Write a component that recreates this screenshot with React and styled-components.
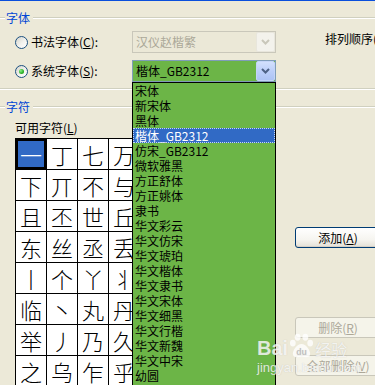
import React from "react";
import styled, { createGlobalStyle } from "styled-components";

const GREEN = "#6cb547";
const UI_FONT = `"Noto Sans CJK SC", "Noto Sans", "Liberation Sans", sans-serif`;

const Global = createGlobalStyle`
  html, body { margin: 0; padding: 0; background: #ece9d8; }
  body { width: 375px; height: 385px; overflow: hidden; font-family: ${UI_FONT}; }
`;

const Window = styled.div`
  position: relative;
  width: 375px;
  height: 385px;
  overflow: hidden;
  background: #ece9d8;
  font-size: 12px;
  line-height: 14px;
  color: #000;
`;

const TopEdge = styled.div`
  height: 1px;
  background: #0a4fdc;
`;

const GroupHeader = styled.div`
  display: flex;
  align-items: center;
  height: 14px;
  margin-top: ${(p) => p.$top}px;
`;

const Rule = styled.div`
  height: 0;
  border-top: 1px solid #d0d0bf;
  border-bottom: 1px solid #fff;
  flex: ${(p) => (p.$grow ? "1" : "none")};
  width: ${(p) => (p.$grow ? "auto" : "5px")};
`;

const GroupLabel = styled.span`
  color: #0046d5;
  padding: 0 3px 0 1px;
`;

const Separator = styled.div`
  margin-top: ${(p) => p.$top}px;
  border-top: 1px solid #d0d0bf;
  border-bottom: 1px solid #fff;
`;

const OptionRow = styled.div`
  display: flex;
  align-items: center;
  height: 22px;
  padding-left: 15px;
  margin-top: ${(p) => p.$top}px;
  white-space: nowrap;
`;

const Radio = styled.span`
  flex: none;
  box-sizing: border-box;
  width: 13px;
  height: 13px;
  border-radius: 50%;
  border: 1px solid #1c5180;
  background: linear-gradient(135deg, #d4d3cb 0%, #f3f3ef 55%, #fff 100%);
  display: flex;
  align-items: center;
  justify-content: center;
  &::after {
    content: "";
    width: 5px;
    height: 5px;
    border-radius: 50%;
    background: ${(p) =>
      p.$checked
        ? "radial-gradient(circle at 35% 35%, #8df08a 0%, #2fb52c 55%, #138f12 100%)"
        : "transparent"};
  }
`;

const OptionLabel = styled.span`
  width: 101px;
  margin-left: 3px;
  flex: none;
`;

const SortLabel = styled.span`
  margin-left: 49px;
  align-self: flex-start;
  margin-top: 1px;
`;

const ComboWrap = styled.div`
  position: relative;
  flex: none;
`;

const Combo = styled.div`
  box-sizing: border-box;
  width: 144px;
  height: 22px;
  border: 1px solid ${(p) => (p.$disabled ? "#c9c7ba" : "#7f9db9")};
  background: ${(p) => (p.$disabled ? "#ebe8d7" : GREEN)};
  display: flex;
  align-items: center;
`;

const ComboText = styled.span`
  flex: 1;
  padding-left: 3px;
  color: ${(p) => (p.$disabled ? "#aca899" : "#000")};
`;

const DropButton = styled.span`
  box-sizing: border-box;
  width: 19px;
  height: 20px;
  border-radius: 2px;
  border: 1px solid ${(p) => (p.$disabled ? "#e8e6dc" : "#c4d4f8")};
  background: ${(p) =>
    p.$disabled
      ? "#f3f2ec"
      : "linear-gradient(180deg, #d3e0fd 0%, #bccff9 50%, #adc3f5 100%)"};
  display: flex;
  align-items: center;
  justify-content: center;
`;

const DropList = styled.div`
  position: absolute;
  top: 100%;
  left: 0;
  z-index: 3;
  box-sizing: border-box;
  width: 144px;
  border: 1px solid #000;
  background: ${GREEN};
  padding-bottom: 4px;
`;

const ListItem = styled.div`
  height: 15px;
  line-height: 15px;
  padding-left: 2px;
  white-space: nowrap;
  color: ${(p) => (p.$active ? "#fff" : "#000")};
  background: ${(p) => (p.$active ? "#316ac5" : "transparent")};
  outline: ${(p) => (p.$active ? "1px dotted #c8d8f0" : "none")};
  outline-offset: -1px;
`;

const CharArea = styled.div`
  display: grid;
  grid-template-columns: 280px 1fr;
  padding-left: 15px;
`;

const CharColumn = styled.div`
  display: flex;
  flex-direction: column;
`;

const FieldLabel = styled.div`
  margin-top: 7px;
`;

const CharGrid = styled.div`
  margin-top: 3px;
  display: grid;
  grid-template-columns: repeat(7, 30px);
  grid-auto-rows: 30px;
  gap: 1px;
  width: max-content;
  background: #000;
  border: 1px solid #000;
`;

const Cell = styled.div`
  position: relative;
  display: flex;
  align-items: center;
  justify-content: center;
  background: ${(p) => (p.$selected ? "#316ac5" : "#fff")};
  color: ${(p) => (p.$selected ? "#fff" : "#000")};
  font-size: 22px;
  line-height: 1;
  font-weight: 300;
  box-shadow: ${(p) => (p.$selected ? "inset 0 0 0 2px #000" : "none")};
  outline: ${(p) => (p.$selected ? "1px solid #000" : "none")};
`;

const ButtonColumn = styled.div`
  display: flex;
  flex-direction: column;
`;

const PushButton = styled.button`
  box-sizing: border-box;
  width: 86px;
  height: 21px;
  padding: 0;
  margin-top: ${(p) => p.$top}px;
  border-radius: 3px;
  border: 1px solid ${(p) => (p.disabled ? "#c9c7ba" : "#003c74")};
  background: ${(p) =>
    p.disabled
      ? "#f5f4ea"
      : "linear-gradient(180deg, #ffffff 0%, #f6f5f0 60%, #e3e0d6 100%)"};
  box-shadow: ${(p) => (p.disabled ? "none" : "inset 0 -1px 0 #d6d0c5")};
  color: ${(p) => (p.disabled ? "#aca899" : "#000")};
  font-family: ${UI_FONT};
  font-size: 12px;
  line-height: 14px;
  text-align: center;
`;

const Watermark = styled.div`
  position: absolute;
  left: 257px;
  top: 332px;
  z-index: 5;
  color: rgba(255, 255, 255, 0.78);
  text-shadow: 0 0 1px rgba(120, 120, 120, 0.35);
  pointer-events: none;
`;

const MarkTop = styled.div`
  display: flex;
  align-items: flex-end;
  height: 27px;
`;

const MarkBai = styled.span`
  font-family: "Liberation Sans", Arial, sans-serif;
  font-weight: bold;
  font-size: 20px;
  line-height: 21px;
`;

const MarkJing = styled.span`
  font-size: 16px;
  line-height: 20px;
`;

const MarkUrl = styled.div`
  font-family: "Liberation Sans", Arial, sans-serif;
  font-size: 13px;
  line-height: 14px;
  margin-top: 2px;
`;

const Chevron = ({ color }) => (
  <svg width="9" height="6" viewBox="0 0 9 6" aria-hidden="true">
    <path d="M1 1 L4.5 4.5 L8 1" fill="none" stroke={color} strokeWidth="2" />
  </svg>
);

const Paw = () => (
  <svg width="27" height="26" viewBox="0 0 28 26" aria-hidden="true">
    <g fill="rgba(255,255,255,0.78)">
      <ellipse cx="5" cy="10" rx="3" ry="3.6" />
      <ellipse cx="10" cy="4" rx="3" ry="3.6" />
      <ellipse cx="18" cy="4" rx="3" ry="3.6" />
      <ellipse cx="23" cy="10" rx="3" ry="3.6" />
      <path d="M14 11 C9 11 5 18 5 21 C5 25 9 25 14 24 C19 25 23 25 23 21 C23 18 19 11 14 11 Z" />
    </g>
    <text x="14" y="22" textAnchor="middle" fontFamily="Liberation Sans, Arial, sans-serif" fontWeight="bold" fontSize="9" fill="rgba(150,150,150,0.5)">du</text>
  </svg>
);

const fonts = [
  "宋体", "新宋体", "黑体", "楷体_GB2312", "仿宋_GB2312", "微软雅黑", "方正舒体",
  "方正姚体", "隶书", "华文彩云", "华文仿宋", "华文琥珀", "华文楷体", "华文隶书",
  "华文宋体", "华文细黑", "华文行楷", "华文新魏", "华文中宋", "幼圆",
];

const chars = [
  "一丁七万丈三上",
  "下丌不与丐丑专",
  "且丕世丘丙业丛",
  "东丝丞丢两严丧",
  "丨个丫丬中丰串",
  "临丶丸丹为主丽",
  "举丿乃久乇么义",
  "之乌乍乎乏乐乒",
];

export default function App() {
  return (
    <Window>
      <Global />
      <TopEdge />
      <GroupHeader $top={10}>
        <Rule />
        <GroupLabel>字体</GroupLabel>
        <Rule $grow />
      </GroupHeader>

      <OptionRow $top={6}>
        <Radio />
        <OptionLabel>书法字体(<u>C</u>):</OptionLabel>
        <ComboWrap>
          <Combo $disabled>
            <ComboText $disabled>汉仪赵楷繁</ComboText>
            <DropButton $disabled>
              <Chevron color="#c9c7ba" />
            </DropButton>
          </Combo>
        </ComboWrap>
        <SortLabel>排列顺序(<u>O</u>):</SortLabel>
      </OptionRow>

      <OptionRow $top={7}>
        <Radio $checked />
        <OptionLabel>系统字体(<u>S</u>):</OptionLabel>
        <ComboWrap>
          <Combo>
            <ComboText>楷体_GB2312</ComboText>
            <DropButton>
              <Chevron color="#4d6185" />
            </DropButton>
          </Combo>
          <DropList>
            {fonts.map((f) => (
              <ListItem key={f} $active={f === "楷体_GB2312"}>
                {f}
              </ListItem>
            ))}
          </DropList>
        </ComboWrap>
      </OptionRow>

      <Separator $top={6} />

      <GroupHeader $top={10}>
        <Rule />
        <GroupLabel>字符</GroupLabel>
        <Rule $grow />
      </GroupHeader>

      <CharArea>
        <CharColumn>
          <FieldLabel>可用字符(<u>L</u>)</FieldLabel>
          <CharGrid>
            {chars.map((row, r) =>
              Array.from(row).map((c, i) => (
                <Cell key={`${r}-${i}`} $selected={r === 0 && i === 0}>
                  {c}
                </Cell>
              ))
            )}
          </CharGrid>
        </CharColumn>
        <ButtonColumn>
          <PushButton $top={113}>添加(<u>A</u>)</PushButton>
          <PushButton $top={69} disabled>
            删除(<u>R</u>)
          </PushButton>
          <PushButton $top={17} disabled>
            全部删除(<u>V</u>)
          </PushButton>
        </ButtonColumn>
      </CharArea>

      <Watermark>
        <MarkTop>
          <MarkBai>Bai</MarkBai>
          <Paw />
          <MarkJing>经验</MarkJing>
        </MarkTop>
        <MarkUrl>jingyan.baidu.com</MarkUrl>
      </Watermark>
    </Window>
  );
}
